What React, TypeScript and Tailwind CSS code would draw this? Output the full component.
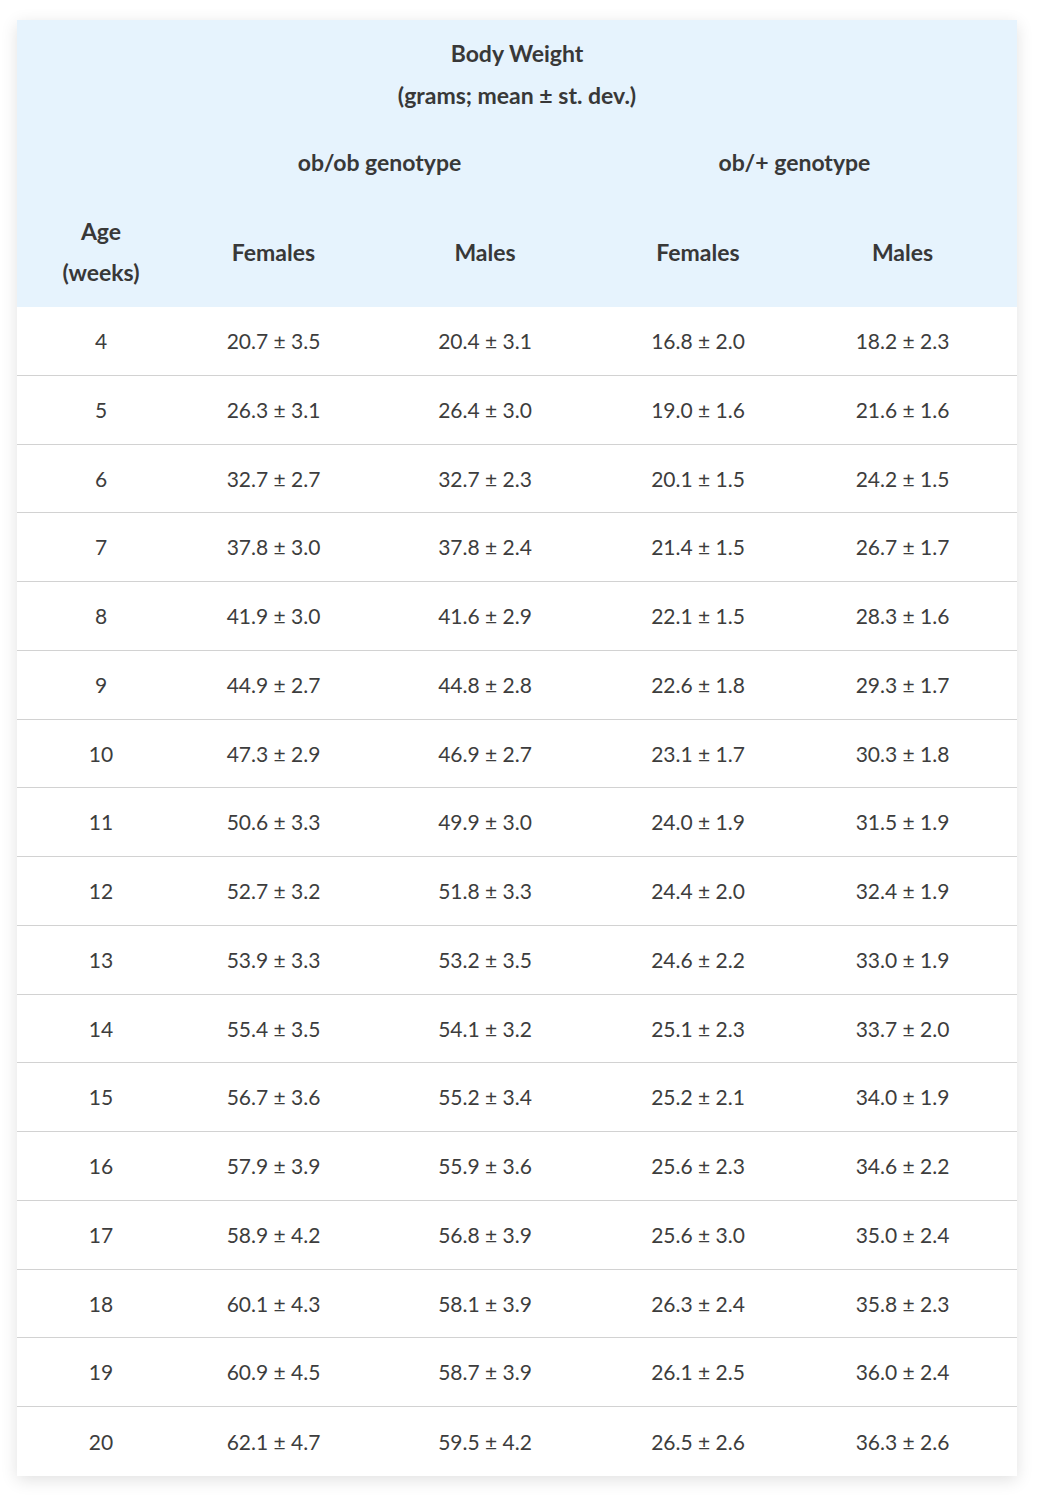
const rows: [string, string, string, string, string][] = [
  ["4", "20.7 ± 3.5", "20.4 ± 3.1", "16.8 ± 2.0", "18.2 ± 2.3"],
  ["5", "26.3 ± 3.1", "26.4 ± 3.0", "19.0 ± 1.6", "21.6 ± 1.6"],
  ["6", "32.7 ± 2.7", "32.7 ± 2.3", "20.1 ± 1.5", "24.2 ± 1.5"],
  ["7", "37.8 ± 3.0", "37.8 ± 2.4", "21.4 ± 1.5", "26.7 ± 1.7"],
  ["8", "41.9 ± 3.0", "41.6 ± 2.9", "22.1 ± 1.5", "28.3 ± 1.6"],
  ["9", "44.9 ± 2.7", "44.8 ± 2.8", "22.6 ± 1.8", "29.3 ± 1.7"],
  ["10", "47.3 ± 2.9", "46.9 ± 2.7", "23.1 ± 1.7", "30.3 ± 1.8"],
  ["11", "50.6 ± 3.3", "49.9 ± 3.0", "24.0 ± 1.9", "31.5 ± 1.9"],
  ["12", "52.7 ± 3.2", "51.8 ± 3.3", "24.4 ± 2.0", "32.4 ± 1.9"],
  ["13", "53.9 ± 3.3", "53.2 ± 3.5", "24.6 ± 2.2", "33.0 ± 1.9"],
  ["14", "55.4 ± 3.5", "54.1 ± 3.2", "25.1 ± 2.3", "33.7 ± 2.0"],
  ["15", "56.7 ± 3.6", "55.2 ± 3.4", "25.2 ± 2.1", "34.0 ± 1.9"],
  ["16", "57.9 ± 3.9", "55.9 ± 3.6", "25.6 ± 2.3", "34.6 ± 2.2"],
  ["17", "58.9 ± 4.2", "56.8 ± 3.9", "25.6 ± 3.0", "35.0 ± 2.4"],
  ["18", "60.1 ± 4.3", "58.1 ± 3.9", "26.3 ± 2.4", "35.8 ± 2.3"],
  ["19", "60.9 ± 4.5", "58.7 ± 3.9", "26.1 ± 2.5", "36.0 ± 2.4"],
  ["20", "62.1 ± 4.7", "59.5 ± 4.2", "26.5 ± 2.6", "36.3 ± 2.6"],
];

const cols = "grid grid-cols-[168px_177px_246px_180px_229px]";

export default function App() {
  return (
    <div className="min-h-[1500px] bg-white pt-[20px] pl-[17px] font-['Lato','Open_Sans',sans-serif] text-[#3d3d3d]">
      <div className="w-[1000px] bg-white shadow-[0_4px_16px_rgba(0,0,0,0.12)]">
        {/* Header */}
        <div className="bg-[#e6f3fd] font-bold text-[23px] text-[#383838]">
          <div className="h-[107px] flex flex-col items-center justify-center leading-[42px]">
            <span>Body Weight</span>
            <span>(grams; mean ± st. dev.)</span>
          </div>
          <div className="h-[70px] grid grid-cols-[170px_385px_445px] items-center">
            <div />
            <div className="text-center">ob/ob genotype</div>
            <div className="text-center">ob/+ genotype</div>
          </div>
          <div className={`${cols} h-[110px] items-center text-center`}>
            <div className="flex flex-col leading-[41px]">
              <span>Age</span>
              <span>(weeks)</span>
            </div>
            <div>Females</div>
            <div>Males</div>
            <div>Females</div>
            <div>Males</div>
          </div>
        </div>

        {/* Body */}
        <div className="text-[21px]">
          {rows.map((r, i) => (
            <div
              key={r[0]}
              className={`${cols} h-[68.75px] items-center text-center ${
                i < rows.length - 1 ? "border-b border-[#d2d2d2]" : ""
              }`}
            >
              {r.map((c, j) => (
                <div key={j}>{c}</div>
              ))}
            </div>
          ))}
        </div>
      </div>
    </div>
  );
}
